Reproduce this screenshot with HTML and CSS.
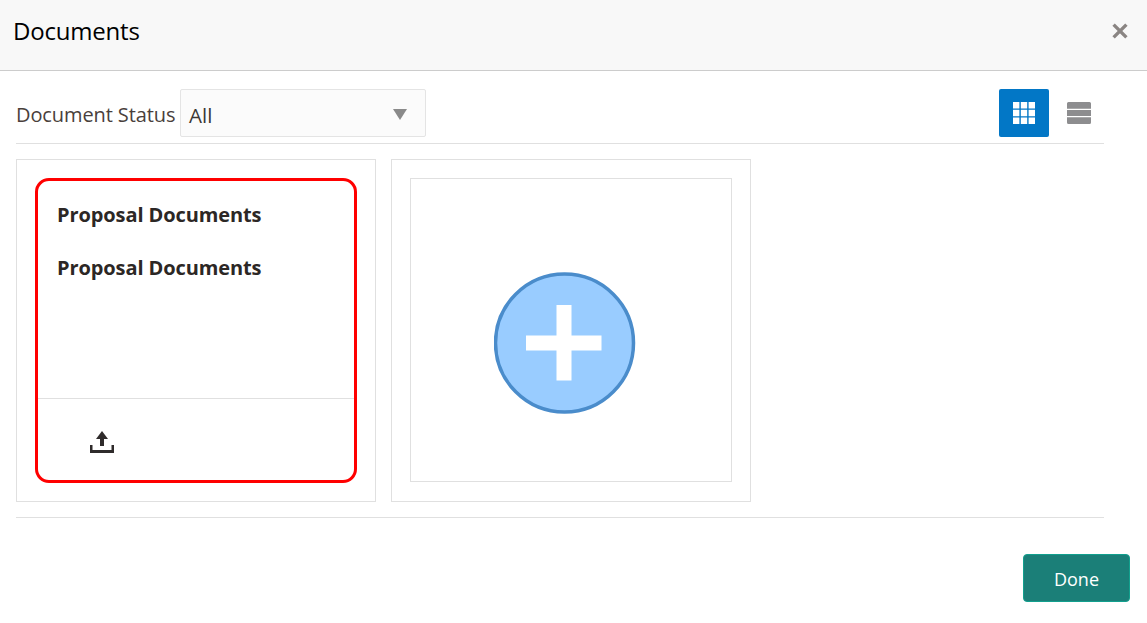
FILE: index.html
```html
<!DOCTYPE html>
<html lang="en">
<head>
    <meta charset="UTF-8">
    <meta name="viewport" content="width=device-width, initial-scale=1.0">
    <title>Documents</title>
    <link rel="stylesheet" href="styles.css">
</head>
<body>
    <div class="modal-header">
        <h1 class="modal-title">Documents</h1>
        <svg class="close-icon" width="16" height="16" viewBox="0 0 16 16">
            <path d="M1.6 1.6 L14.4 14.4 M14.4 1.6 L1.6 14.4" stroke="#8a8583" stroke-width="3.4" fill="none"/>
        </svg>
    </div>

    <div class="modal-body">
        <div class="toolbar">
            <label class="status-label">Document Status</label>
            <div class="status-select">
                <span class="status-value">All</span>
                <span class="select-arrow"></span>
            </div>
            <div class="view-switch">
                <button class="view-btn view-btn-active">
                    <svg width="22" height="22" viewBox="0 0 22 22">
                        <path fill="#fff" d="M0 0h6.4v6.4H0zM7.8 0h6.4v6.4H7.8zM15.6 0H22v6.4h-6.4zM0 7.8h6.4v6.4H0zM7.8 7.8h6.4v6.4H7.8zM15.6 7.8H22v6.4h-6.4zM0 15.6h6.4V22H0zM7.8 15.6h6.4V22H7.8zM15.6 15.6H22V22h-6.4z"/>
                    </svg>
                </button>
                <button class="view-btn view-btn-list">
                    <svg width="24" height="22" viewBox="0 0 24 22">
                        <path fill="#8d8d8f" d="M1.5 0h21A1.5 1.5 0 0 1 24 1.5v5.3H0V1.500A1.5 1.5 0 0 1 1.500 0zM0 8h24v6H0zM0 15.200h24v5.300A1.500 1.500 0 0 1 22.500 22h-21A1.500 1.500 0 0 1 0 20.500z"/>
                    </svg>
                </button>
            </div>
        </div>

        <div class="card-row">
            <div class="doc-card">
                <div class="doc-highlight">
                    <div class="doc-text">
                        <div class="doc-name">Proposal Documents</div>
                        <div class="doc-name">Proposal Documents</div>
                    </div>
                    <div class="doc-actions">
                        <svg width="24" height="22" viewBox="0 0 24 22">
                            <path fill="#2f2b2b" d="M12 0 L18 8 H14 V15 H10 V8 H6 Z M0 14 H2.500 V19 H21.500 V14 H24 V22 H0 Z"/>
                        </svg>
                    </div>
                </div>
            </div>
            <div class="doc-card">
                <div class="add-box">
                    <svg width="142" height="142" viewBox="0 0 142 142">
                        <circle cx="70.500" cy="71" r="69" fill="#99ccff" stroke="#4a8ccb" stroke-width="3.500"/>
                        <path fill="#fff" d="M62.500 33h15v30.500h30v15h-30v30h-15v-30h-30.500v-15h30.500z"/>
                    </svg>
                </div>
            </div>
        </div>
    </div>

    <div class="modal-footer">
        <button class="btn-done">Done</button>
    </div>
</body>
</html>
```

FILE: styles.css
```css
body {
    margin: 0;
    font-family: "Open Sans", "Noto Sans", sans-serif;
    background: #fff;
    color: #2c2725;
}
.modal-header {
    height: 60px;
    background: #f8f8f8;
    border-bottom: 1px solid #ccc;
    display: flex;
    align-items: center;
    justify-content: space-between;
    padding: 0 19px 10px 13px;
}
.modal-title {
    margin: 0;
    font-size: 24px;
    font-weight: 400;
    letter-spacing: -0.2px;
    color: #000;
}
.close-icon {
    position: relative;
    top: 1px;
}
.modal-body {
    width: 1088px;
    margin-left: 16px;
    border-bottom: 1px solid #e0e0e0;
    padding-bottom: 15px;
}
.toolbar {
    display: flex;
    align-items: center;
    padding-top: 18px;
    padding-bottom: 6px;
    border-bottom: 1px solid #e0e0e0;
}
.status-label {
    font-size: 20px;
    letter-spacing: -0.1px;
    color: #4a3f3c;
    width: 164px;
    padding-top: 2px;
    white-space: nowrap;
}
.status-select {
    width: 218px;
    height: 46px;
    border: 1px solid #e4e4e4;
    border-radius: 2px;
    background: #fbfbfb;
    display: flex;
    align-items: center;
    justify-content: space-between;
    padding: 0 18px 0 8px;
    font-size: 20.5px;
    color: #3c3735;
}
.status-value {
    padding-top: 3px;
}
.select-arrow {
    width: 0;
    height: 0;
    margin-top: 2px;
    border-left: 7.5px solid transparent;
    border-right: 7.5px solid transparent;
    border-top: 11px solid #8a8a8a;
}
.view-switch {
    margin-left: auto;
    display: flex;
    gap: 18px;
    padding-right: 13px;
}
.view-btn {
    width: 50px;
    height: 48px;
    padding: 0;
    border: none;
    border-radius: 2px;
    background: transparent;
    display: flex;
    align-items: center;
    justify-content: center;
}
.view-btn-list {
    width: 24px;
}
.view-btn-active {
    background: #0277c6;
}
.card-row {
    display: flex;
    gap: 15px;
    margin-top: 15px;
}
.doc-card {
    width: 360px;
    height: 343px;
    box-sizing: border-box;
    border: 1px solid #e0e0e0;
    padding: 18px;
}
.doc-highlight {
    width: 322px;
    height: 305px;
    box-sizing: border-box;
    border: 3px solid #f00;
    border-radius: 14px;
    display: flex;
    flex-direction: column;
}
.doc-text {
    height: 218px;
    box-sizing: border-box;
    padding: 19px 0 0 19px;
    border-bottom: 1px solid #e0e0e0;
}
.doc-name {
    font-size: 20px;
    font-weight: 700;
    letter-spacing: -0.1px;
    line-height: 30px;
    margin-bottom: 23px;
    color: #2c2725;
}
.doc-actions {
    padding: 32px 0 0 52px;
}
.add-box {
    width: 322px;
    height: 304px;
    box-sizing: border-box;
    border: 1px solid #e0e0e0;
    display: flex;
    align-items: center;
    justify-content: center;
    padding-right: 13px;
    padding-top: 26px;
}
.modal-footer {
    display: flex;
    justify-content: flex-end;
    padding: 36px 17px 0 0;
}
.btn-done {
    width: 107px;
    height: 48px;
    padding: 2px 0 0;
    border: 1px solid #12a08e;
    border-radius: 4px;
    background: #1b7f78;
    color: #fff;
    font-family: inherit;
    font-size: 18px;
}
```
